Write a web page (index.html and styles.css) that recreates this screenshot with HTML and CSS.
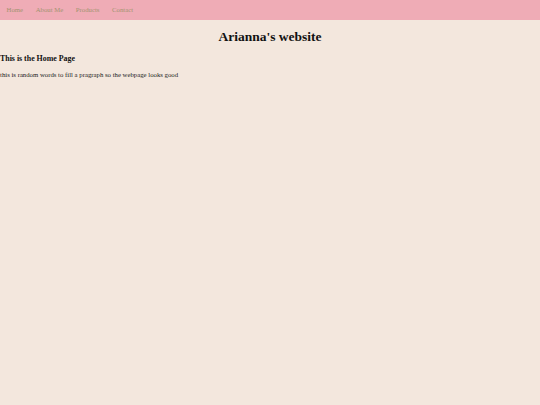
FILE: index.html
```html
<!DOCTYPE html>
<html>
<head>
<meta charset="utf-8">
<link rel="stylesheet" href="styles.css">
</head>
<body>
<nav class="topnav">
  <a href="#">Home</a>
  <a href="#">About Me</a>
  <a href="#">Products</a>
  <a href="#">Contact</a>
</nav>
<h1 class="title">Arianna's website</h1>
<h3 class="subtitle">This is the Home Page</h3>
<p class="text">this is random words to fill a pragraph so the webpage looks good</p>
</body>
</html>
```
FILE: styles.css
```css
html, body {
  margin: 0;
  padding: 0;
  background: #f3e7dd;
  font-family: "Liberation Serif", serif;
  font-variant-ligatures: none;
  color: #000;
  height: 100%;
}
.topnav {
  background: #efacb6;
  display: flex;
  overflow: hidden;
  padding-left: 0.3px;
}
.topnav a {
  color: #a2936f;
  text-decoration: none;
  font-size: 6.75px;
  line-height: 7.8px;
  padding: 5.9px 6.3px;
}
.title {
  text-align: center;
  font-size: 13.5px;
  margin: 0.67em 0;
  color: #111;
}
.subtitle {
  font-size: 7.9px;
  margin: 1em 0;
  color: #111;
}
.text {
  font-size: 6.75px;
  margin: 1em 0;
  color: #222;
}
```
